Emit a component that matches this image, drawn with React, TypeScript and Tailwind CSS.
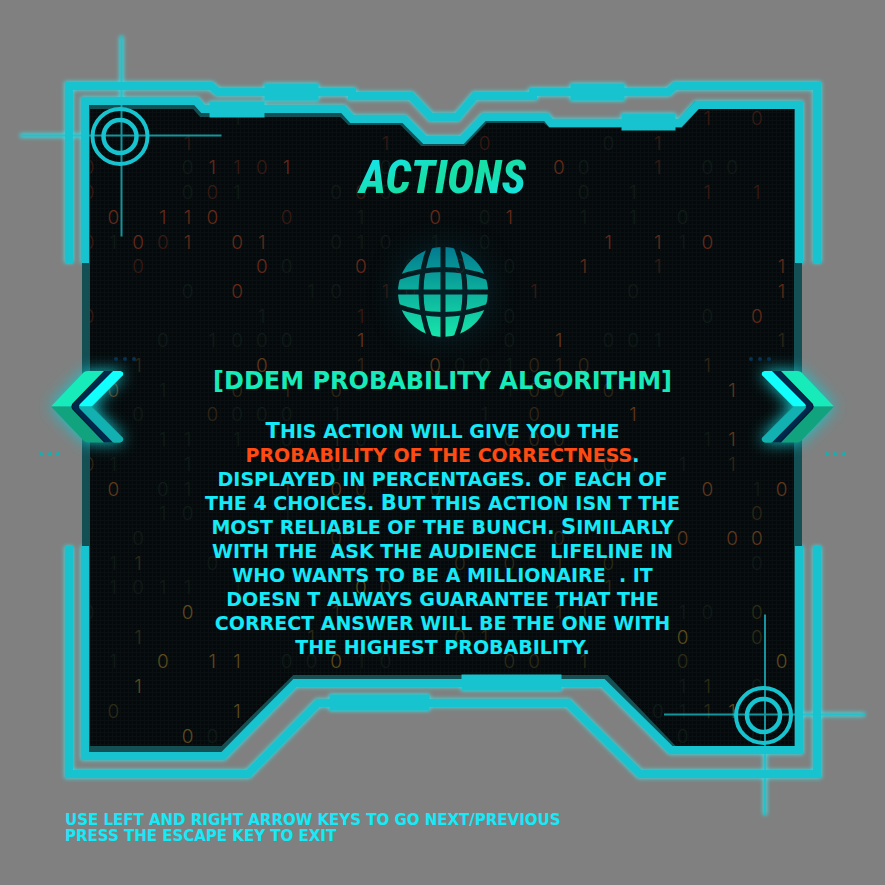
import React, { useState } from "react";

const TEAL = "#17c3ce";
const HALO = "#35eef5";

/* 0/1 bright, O/I medium, o/i faint; one character per 24.75px cell */
const RAIN = [
  "......i..................I.O.",
  "....I.......I...O....o.I.....",
  "O...o1IO1...o......0o..I.oo..",
  "O...oOi...oOo.......o.i..I.I.",
  ".0.110..O..i..0.o1..i.i.o....",
  "Oi0O1.01..oio.i.o....1.1i0...",
  "..O....0o..0.o.O.o..1..I....1",
  "....o.0..io.IO....I...o.....1",
  "O......i...I.....o.......o.0.",
  "...o.iooo..1.....o.1.ooi....I",
  "..I....0...I..0ooiOIO....I...",
  ".0.i..O.I.O......iOO.O....1..",
  "..o..Oooo.i.....i.O...1......",
  "...ii.i.o.Io..I..OOO.....i1..",
  "Oi..i.....o...i......OI.i.I..",
  ".0.oi...I.0O..O....o.....0.i0",
  "...io...i..................O.",
  "..o.......O........O....0.00.",
  ".iI..o.........O.O.I.O.....o.",
  ".ioii.i....0O........I.......",
  "o...0.....I....o...II...io.O.",
  "..I......I.....OI.......0..O.",
  ".i.0.11.oo0io....OO.I...O...0",
  "..1.....................iI.o.",
  ".O....1................oiI1..",
  "....0o..................o..o.",
];

function rainColor(ch: string, row: number) {
  if (ch === "o" || ch === "i") return "#101b17";
  const bright = ch === "0" || ch === "1";
  if (row < 9) return bright ? "#662817" : "#381a12";
  if (row < 18) return bright ? "#5f371a" : "#302515";
  return bright ? "#5c4a1a" : "#2c2b15";
}

const OUTER_TOP =
  "M69 263V86H211L218 92H352V96H411L431 117H457L475 96H533V92H668L675 86H817V263";
const OUTER_BOTTOM = "M69 546V774H248L318 703H568L640 774H817V546";
const INNER_TOP =
  "M85 263V101H196L203 109H343L352 119H404L425 140H462L484 117H546L551 123H680L697 105H799V263";
const INNER_BOTTOM = "M85 546V756H223L295 683H603L671 750H799V546";
const PANEL =
  "M86 105H195L202 113H342L350 121H402L423 142H463L485 119H545L551 124H680L697 105H798V750H674L606 679H295L223 750H86Z";

function Frame({ color, weight }: { color: string; weight: number }) {
  return (
    <g fill="none" stroke={color} strokeWidth={weight}>
      <path d={OUTER_TOP} />
      <path d={OUTER_BOTTOM} />
      <path d={INNER_TOP} />
      <path d={INNER_BOTTOM} />
      <g fill={color} strokeWidth={weight - 7}>
        <rect x="265" y="84" width="53" height="16" />
        <rect x="571" y="84" width="53" height="16" />
        <rect x="210" y="102" width="54" height="15" />
        <rect x="622" y="114" width="53" height="16" />
        <rect x="462" y="675" width="99" height="15" />
        <rect x="330" y="695" width="99" height="15" />
      </g>
    </g>
  );
}

function Target({ x, y, lx, ly }: { x: number; y: number; lx: number; ly: number }) {
  return (
    <g fill="none" stroke={TEAL}>
      <circle cx={x} cy={y} r="27.5" strokeWidth="4" />
      <circle cx={x} cy={y} r="16.5" strokeWidth="4.500" />
      <g strokeWidth="2" opacity="0.75">
        <path d={`M${lx} ${ly - 100}V${ly + 101}`} />
        <path d={`M${lx - 101} ${ly}H${lx + 100}`} />
      </g>
    </g>
  );
}

function Targets() {
  return (
    <>
      <Target x={120} y={136.5} lx={121.5} ly={135.5} />
      <Target x={763.5} y={715.5} lx={765} ly={714.5} />
    </>
  );
}

function Backdrop() {
  return (
    <svg viewBox="0 0 885 885" className="absolute inset-0 h-full w-full" aria-hidden="true">
      <defs>
        <pattern id="mesh" width="4" height="4" patternUnits="userSpaceOnUse">
          <path d="M0 .5H4M.5 0V4" stroke="#0a1012" />
        </pattern>
        <clipPath id="panel">
          <path d={PANEL} />
        </clipPath>
        <filter id="glow" x="-10%" y="-10%" width="120%" height="120%">
          <feGaussianBlur stdDeviation="2" />
        </filter>
      </defs>
      <g filter="url(#glow)" opacity="0.85">
        <Frame color={HALO} weight={9} />
        <g fill="none" stroke={HALO} strokeWidth="4">
          <path d="M121.500 36V130M20 135.500H120M765 720V815M765 714.500H865" />
        </g>
      </g>
      <path d={PANEL} fill="#06090b" />
      <path d={PANEL} fill="url(#mesh)" />
      <g clipPath="url(#panel)" fontFamily="Inter, Roboto, sans-serif" fontWeight="300" fontSize="19" textAnchor="middle">
        {RAIN.map((line, r) =>
          line.split("").map((ch, c) =>
            ch === "." ? null : (
              <text key={`${r}-${c}`} x={88.5 + 24.75 * c} y={125 + 24.7 * r} fill={rainColor(ch, r)}>
                {ch === "0" || ch === "O" || ch === "o" ? "0" : "1"}
              </text>
            )
          )
        )}
      </g>
      <path d={PANEL} fill="none" stroke="#144f54" strokeWidth="8" />
      <Frame color={TEAL} weight={8} />
      <Targets />
    </svg>
  );
}

function Chevron() {
  return (
    <svg viewBox="36 352 106 108" className="h-[108px] w-[106px] overflow-visible" aria-hidden="true">
      <g className="drop-shadow-[0_0_8px_#12c8d0]">
        <path d="M51 406.500L84 372Q86 371 88 371H120Q124 372 123 375L92 406.500Z" fill="#17ebb9" />
        <path d="M51 406.500L84 441Q86 442.500 88 442.500H120Q124 441 123 438L92 406.500Z" fill="#11a37e" />
        <path d="M104 371H114L80 406.500L114 442.500H104L72 409Q71 406.500 72 404Z" fill="#00284a" />
        <path d="M113 371H120Q124 372 123 375L91 406.500H79Q79 405 80 404Z" fill="#12fffe" />
        <path d="M113 442.500H120Q124 441 123 438L91 406.500H79Q79 408 80 409Z" fill="#12b0b0" />
        <path d="M105 371L73 404Q71 406.500 73 409L105 442" fill="none" stroke="#001a33" />
      </g>
      <g fill="#053356">
        <circle cx="116" cy="359" r="2" />
        <circle cx="125" cy="359" r="2" />
        <circle cx="134" cy="359" r="2" />
      </g>
      <g fill="#12b0b0">
        <circle cx="41" cy="454" r="2" />
        <circle cx="50" cy="454" r="2" />
        <circle cx="58" cy="454" r="2" />
      </g>
    </svg>
  );
}

function Globe() {
  return (
    <svg viewBox="0 0 92 92" className="mt-[45px] size-[92px] overflow-visible drop-shadow-[0_0_14px_#03303a]" aria-hidden="true">
      <defs>
        <linearGradient id="sea" x1="0" y1="0" x2="0" y2="1">
          <stop offset="0" stopColor="#027a90" />
          <stop offset="1" stopColor="#17e6aa" />
        </linearGradient>
        <mask id="lines">
          <rect width="92" height="92" fill="#fff" />
          <g fill="none" stroke="#000" strokeWidth="5">
            <path d="M46 0V92M0 46H92" />
            <path d="M33 0Q15 46 33 92M59 0Q77 46 59 92" />
            <path d="M0 32Q46 15 92 32M0 60Q46 77 92 60" />
          </g>
        </mask>
      </defs>
      <circle cx="46" cy="46" r="45" fill="url(#sea)" mask="url(#lines)" />
    </svg>
  );
}

const Cap = ({ children }: { children: React.ReactNode }) => <span className="text-[21px]">{children}</span>;

export default function App() {
  const [, setPage] = useState(0);
  return (
    <div className="min-h-screen bg-[#808080]">
      <main className="relative mx-auto aspect-square w-full max-w-[885px] font-['DejaVu_Sans',sans-serif] font-bold uppercase">
        <Backdrop />
        <section className="relative flex flex-col items-center pt-[153px]">
          <h1 className="bg-linear-[160deg,#14e4f0_10%,#17dfa8_45%,#17dfa8_60%,#14e4f0_95%] bg-clip-text px-2 font-['Roboto_Condensed','Roboto',sans-serif] text-[46px] leading-[48px] font-extrabold text-transparent italic">
            Actions
          </h1>
          <Globe />
          <h2 className="mt-[27px] text-[24px] leading-[32px] text-[#17ebb9]">[DDEM probability algorithm]</h2>
          <p className="mt-[22px] text-center text-[19px] leading-[24px] whitespace-pre text-[#14eaf8]">
            <span className="block h-6"><Cap>T</Cap>his action will give you the</span>
            <span className="block h-6"><span className="text-[#ff4a12]">probability of the correctness</span>.</span>
            <span className="block h-6">displayed in percentages. of each of</span>
            <span className="block h-6">the 4 choices. <Cap>B</Cap>ut this action isn t the</span>
            <span className="block h-6">most reliable of the bunch. <Cap>S</Cap>imilarly</span>
            <span className="block h-6">{"with the  ask the audience  lifeline in"}</span>
            <span className="block h-6">{"who wants to be a millionaire  . it"}</span>
            <span className="block h-6">doesn t always guarantee that the</span>
            <span className="block h-6">correct answer will be the one with</span>
            <span className="block h-6">the highest probability.</span>
          </p>
        </section>
        <footer className="relative mt-[153px] pl-[65px] text-[15px] leading-[16px] text-[#14eaf8]">
          <p>Use left and right arrow keys to go next/previous</p>
          <p>Press the escape key to exit</p>
        </footer>
        <button type="button" aria-label="Previous" onClick={() => setPage((p) => p - 1)} className="absolute top-[352px] left-9 cursor-pointer">
          <Chevron />
        </button>
        <button type="button" aria-label="Next" onClick={() => setPage((p) => p + 1)} className="absolute top-[352px] right-9 -scale-x-100 cursor-pointer">
          <Chevron />
        </button>
      </main>
    </div>
  );
}
